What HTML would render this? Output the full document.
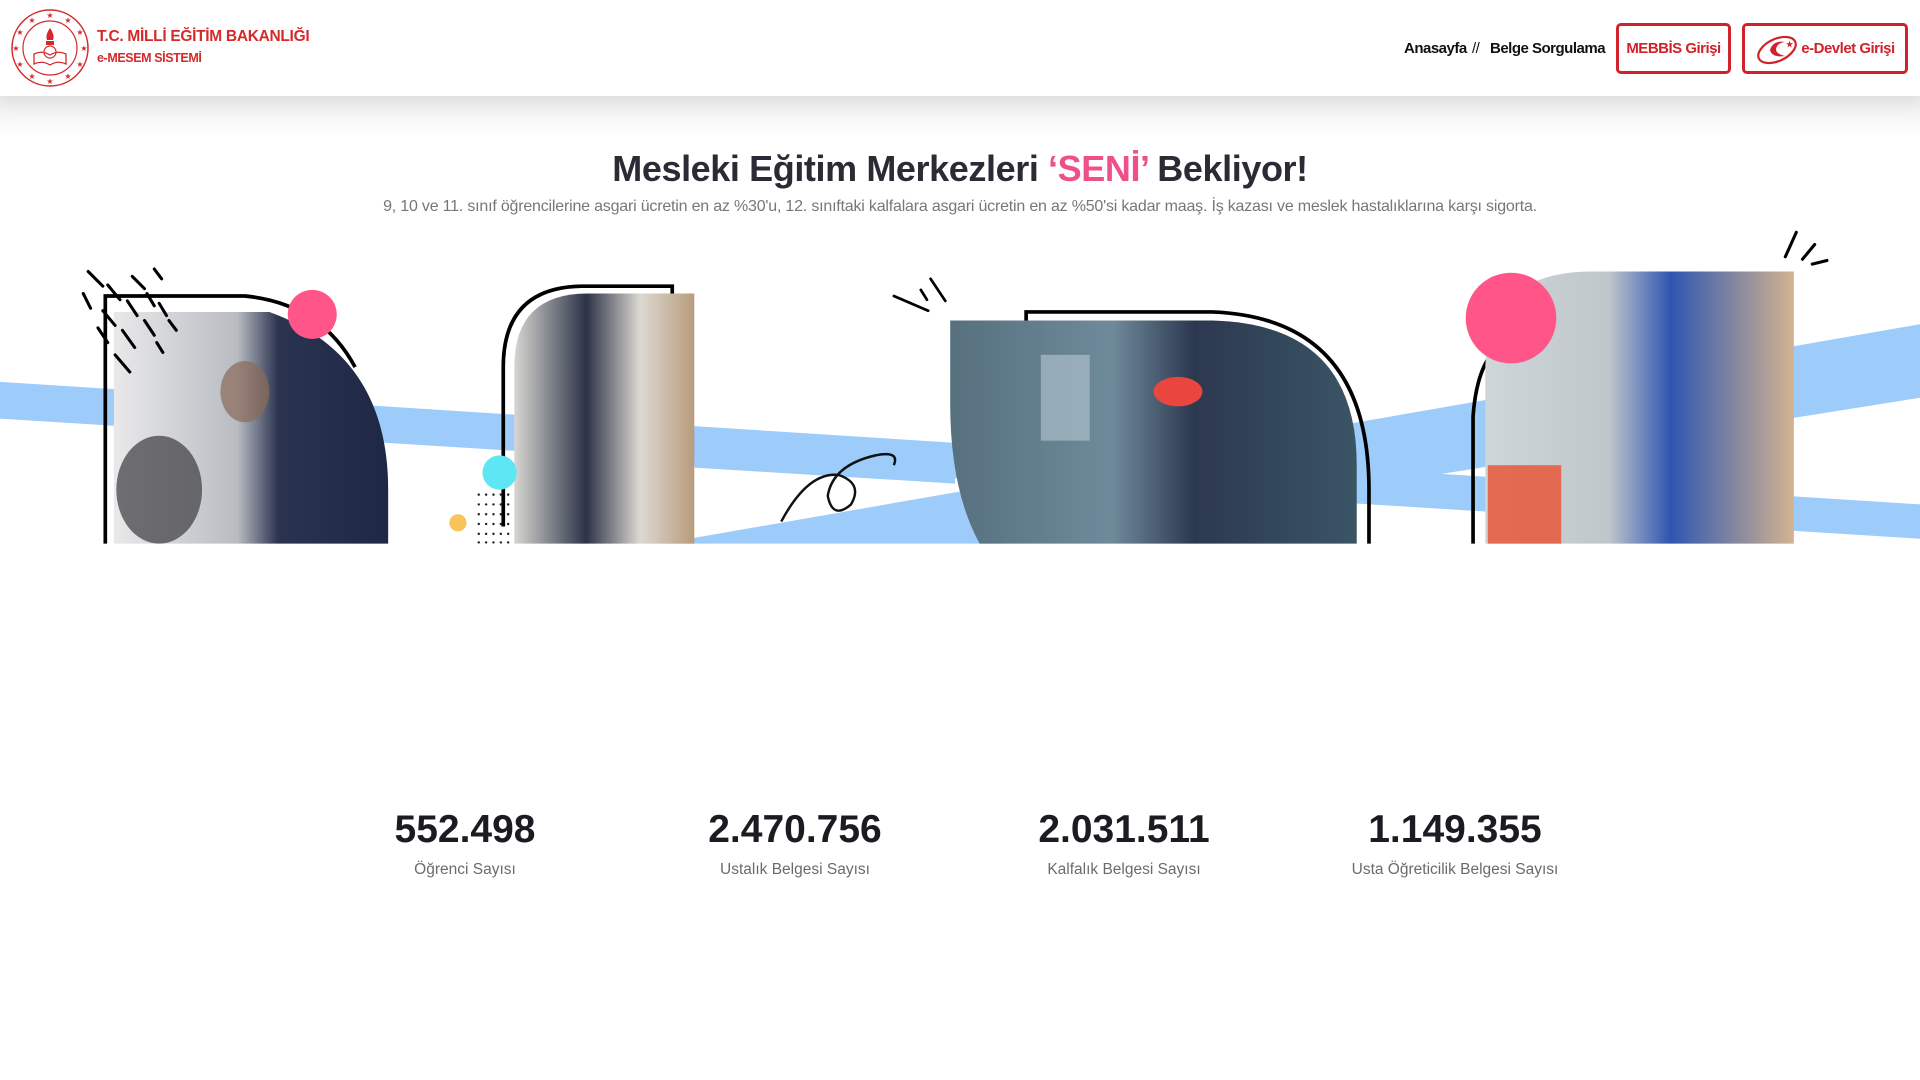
<!DOCTYPE html>
<html><head><meta charset="utf-8"><style>
*{margin:0;padding:0;box-sizing:border-box}
body{width:1920px;height:1080px;background:#fff;font-family:"Liberation Sans",sans-serif;position:relative;overflow:hidden}
.hdr{position:absolute;left:0;top:0;width:1920px;height:96px;background:#fff;box-shadow:0 6px 18px rgba(0,0,0,.07);z-index:2}
.shade{position:absolute;left:0;top:96px;width:1920px;height:40px;background:linear-gradient(#ececec,#fff)}
.t1{position:absolute;left:97px;top:28px;color:#d42a2a;font-weight:bold;font-size:15.5px;letter-spacing:-.3px}
.t2{position:absolute;left:97px;top:51px;color:#d42a2a;font-weight:bold;font-size:12.5px;letter-spacing:-.4px}
.nav{position:absolute;top:40px;font-weight:bold;font-size:15px;color:#111;letter-spacing:-.5px}
.btn{position:absolute;top:23px;height:51px;border:3px solid #d0222a;border-radius:5px;color:#d0222a;font-weight:bold;font-size:15px;letter-spacing:-.5px;display:flex;align-items:center;justify-content:center}
h1{position:absolute;left:0;width:1920px;top:148px;text-align:center;font-size:36px;color:#2b2b36;letter-spacing:-.4px}
h1 span{color:#f0508a}
.sub{position:absolute;left:0;width:1920px;top:198px;text-align:center;font-size:16px;color:#777;letter-spacing:-.2px}
.num{position:absolute;top:808px;width:330px;text-align:center;font-weight:bold;font-size:39px;color:#1b1b22}
.lab{position:absolute;top:861px;width:330px;text-align:center;font-size:15.5px;color:#6b6b6b}
</style></head><body>
<div class="shade"></div>
<div class="hdr">
<svg style="position:absolute;left:10px;top:8px" width="80" height="80" viewBox="0 0 80 80">
<circle cx="40" cy="40" r="38" fill="none" stroke="#d42a2a" stroke-width="1.5"/>
<circle cx="40" cy="40" r="27" fill="none" stroke="#d42a2a" stroke-width="1.2"/>
<g fill="#d42a2a" font-size="8" text-anchor="middle">
<text x="40" y="10">★</text><text x="58" y="15">★</text><text x="70" y="27">★</text><text x="74" y="43">★</text><text x="70" y="59">★</text><text x="58" y="71">★</text><text x="40" y="76">★</text><text x="22" y="71">★</text><text x="10" y="59">★</text><text x="6" y="43">★</text><text x="10" y="27">★</text><text x="22" y="15">★</text></g>
<path d="M24 46 Q32 42 40 47 Q48 42 56 46 L56 56 Q48 52 40 57 Q32 52 24 56Z" fill="none" stroke="#d42a2a" stroke-width="1.3"/>
<circle cx="40" cy="44" r="6" fill="none" stroke="#d42a2a" stroke-width="1.2"/>
<path d="M40 20 Q35 27 37 32 L43 32 Q45 27 40 20Z" fill="#d42a2a"/><rect x="36" y="33" width="8" height="4" fill="#d42a2a"/>
</svg>
<div class="t1">T.C. MİLLİ EĞİTİM BAKANLIĞI</div>
<div class="t2">e-MESEM SİSTEMİ</div>
<div class="nav" style="left:1404px">Anasayfa</div>
<div class="nav" style="left:1472px;font-weight:normal">//</div>
<div class="nav" style="left:1490px">Belge Sorgulama</div>
<div class="btn" style="left:1616px;width:115px">MEBBİS Girişi</div>
<div class="btn" style="left:1742px;width:166px"><svg width="46" height="34" viewBox="0 0 46 34"><ellipse cx="22" cy="18" rx="20" ry="11" transform="rotate(-25 22 18)" fill="none" stroke="#d0222a" stroke-width="2.2"/><path d="M30 10 Q18 8 15 18 Q17 26 30 24 Q21 22 21 17 Q22 11 30 10Z" fill="#d0222a"/><text x="31" y="15" font-size="8" fill="#d0222a">★</text></svg>e-Devlet Girişi</div>
</div>
<h1>Mesleki Eğitim Merkezleri <span>‘SENİ’</span> Bekliyor!</h1>
<div class="sub">9, 10 ve 11. sınıf öğrencilerine asgari ücretin en az %30'u, 12. sınıftaki kalfalara asgari ücretin en az %50'si kadar maaş. İş kazası ve meslek hastalıklarına karşı sigorta.</div>

<svg style="position:absolute;left:0;top:220px" width="1920" height="331" viewBox="0 180 1568 270" preserveAspectRatio="none">
<defs>
<linearGradient id="g1" x1="0" x2="1"><stop offset="0" stop-color="#e9e9ea"/><stop offset=".45" stop-color="#b9bcc2"/><stop offset=".6" stop-color="#2a3350"/><stop offset="1" stop-color="#1e2845"/></linearGradient>
<linearGradient id="g2" x1="0" x2="1"><stop offset="0" stop-color="#d8d6d2"/><stop offset=".4" stop-color="#2b3346"/><stop offset=".7" stop-color="#ddd9d3"/><stop offset="1" stop-color="#b89c7c"/></linearGradient>
<linearGradient id="g3" x1="0" x2="1"><stop offset="0" stop-color="#56707e"/><stop offset=".4" stop-color="#6f8a9a"/><stop offset=".6" stop-color="#2c3850"/><stop offset="1" stop-color="#3a5565"/></linearGradient>
<linearGradient id="g4" x1="0" x2="1"><stop offset="0" stop-color="#cfd6d8"/><stop offset=".4" stop-color="#bfc7cc"/><stop offset=".6" stop-color="#2f56b0"/><stop offset="1" stop-color="#d3b391"/></linearGradient>
</defs>
<polygon points="0,312 1568,412 1568,440 0,342" fill="#9dccfb"/>
<polygon points="540,444 1568,265 1568,325 820,444" fill="#9dccfb"/>
<polygon points="560,380 780,393 560,420" fill="#fff"/>
<polygon points="567,352 780,365 780,395 567,382" fill="#9dccfb"/>
<path d="M86,444 V242 H200 Q262,248 290,300" fill="none" stroke="#000" stroke-width="3"/>
<path d="M93,444 V255 H220 Q317,290 317,400 V444Z" fill="url(#g1)"/>
<ellipse cx="130" cy="400" rx="35" ry="44" fill="#3a3a3e" opacity=".7"/>
<ellipse cx="200" cy="320" rx="20" ry="25" fill="#8a6a58" opacity=".7"/>
<circle cx="255" cy="257" r="20" fill="#ff5588"/>
<g stroke="#000" stroke-width="2.5" stroke-linecap="round"><path d="M72,222 l12,12"/><path d="M88,233 l10,12"/><path d="M108,226 l10,10"/><path d="M126,220 l6,8"/><path d="M68,240 l6,12"/><path d="M84,254 l10,12"/><path d="M104,246 l8,12"/><path d="M120,240 l6,10"/><path d="M80,268 l8,12"/><path d="M100,270 l10,14"/><path d="M118,262 l8,12"/><path d="M94,290 l12,14"/><path d="M130,248 l6,10"/><path d="M138,262 l6,8"/><path d="M128,280 l5,8"/></g>
<path d="M411,430 V300 Q411,235 475,234 H549 V240" fill="none" stroke="#000" stroke-width="3"/>
<path d="M420,444 V300 Q420,240 480,240 H567 V444Z" fill="url(#g2)"/>
<circle cx="408" cy="386" r="14" fill="#5ee6f5"/>
<circle cx="374" cy="427" r="7" fill="#f8c45a"/>
<g fill="#222"><circle cx="391" cy="404" r="1"/><circle cx="397" cy="404" r="1"/><circle cx="403" cy="404" r="1"/><circle cx="409" cy="404" r="1"/><circle cx="415" cy="404" r="1"/>
<circle cx="391" cy="412" r="1"/><circle cx="397" cy="412" r="1"/><circle cx="403" cy="412" r="1"/><circle cx="409" cy="412" r="1"/><circle cx="415" cy="412" r="1"/>
<circle cx="391" cy="420" r="1"/><circle cx="397" cy="420" r="1"/><circle cx="403" cy="420" r="1"/><circle cx="409" cy="420" r="1"/><circle cx="415" cy="420" r="1"/>
<circle cx="391" cy="428" r="1"/><circle cx="397" cy="428" r="1"/><circle cx="403" cy="428" r="1"/><circle cx="409" cy="428" r="1"/><circle cx="415" cy="428" r="1"/>
<circle cx="391" cy="436" r="1"/><circle cx="397" cy="436" r="1"/><circle cx="403" cy="436" r="1"/><circle cx="409" cy="436" r="1"/><circle cx="415" cy="436" r="1"/>
<circle cx="391" cy="443" r="1"/><circle cx="397" cy="443" r="1"/><circle cx="403" cy="443" r="1"/><circle cx="409" cy="443" r="1"/><circle cx="415" cy="443" r="1"/></g>
<path d="M638,426 Q660,385 685,388 Q705,395 695,412 Q680,425 676,405 Q680,380 715,372 Q735,368 730,380" fill="none" stroke="#111" stroke-width="2"/>
<g stroke="#000" stroke-width="2.2" stroke-linecap="round"><path d="M730,242 l28,12"/><path d="M752,237 l5,8"/><path d="M760,228 l12,18"/></g>
<path d="M838,262 V255 H990 Q1118,260 1118,400 V444" fill="none" stroke="#000" stroke-width="3"/>
<path d="M776,262 H990 Q1108,265 1108,380 V444 H800 Q776,400 776,330Z" fill="url(#g3)"/>
<rect x="850" y="290" width="40" height="70" fill="#b8c8d4" opacity=".6"/>
<ellipse cx="962" cy="320" rx="20" ry="12" fill="#e8463f"/>
<path d="M1203,444 V340 Q1206,300 1222,285" fill="none" stroke="#000" stroke-width="3"/>
<path d="M1213,444 V300 Q1215,222 1300,222 H1465 V444Z" fill="url(#g4)"/>
<rect x="1215" y="380" width="60" height="64" fill="#e8583a" opacity=".85"/>
<circle cx="1234" cy="260" r="37" fill="#ff5588"/>
<g stroke="#000" stroke-width="2.5" stroke-linecap="round"><path d="M1467,190 l-9,20"/><path d="M1482,200 l-10,12"/><path d="M1480,216 l12,-3"/></g>
</svg>

<div class="num" style="left:300px">552.498</div><div class="lab" style="left:300px">Öğrenci Sayısı</div>
<div class="num" style="left:630px">2.470.756</div><div class="lab" style="left:630px">Ustalık Belgesi Sayısı</div>
<div class="num" style="left:959px">2.031.511</div><div class="lab" style="left:959px">Kalfalık Belgesi Sayısı</div>
<div class="num" style="left:1290px">1.149.355</div><div class="lab" style="left:1290px">Usta Öğreticilik Belgesi Sayısı</div>
</body></html>
